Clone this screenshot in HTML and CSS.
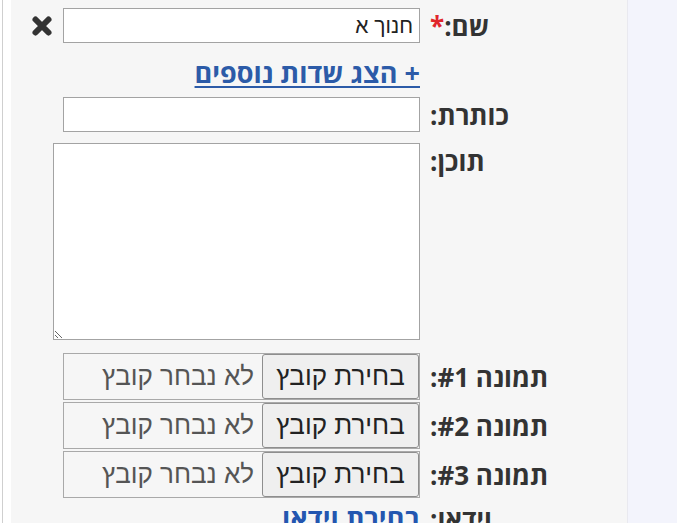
FILE: index.html
```html
<!DOCTYPE html>
<html lang="he">
<head>
<meta charset="utf-8">
<title>טופס</title>
<link rel="stylesheet" href="styles.css">
</head>
<body>
<div class="page">
  <div class="strip"></div>
  <main class="panel">
    <form class="form" dir="rtl">
      <label class="lbl r1" for="name">שם:<span class="req">*</span></label>
      <div class="field r1"><input id="name" class="txt" type="text" value="חנוך א"></div>
      <div class="icon r1" aria-label="הסר">
        <svg width="24" height="24" viewBox="0 0 24 24"><path d="M5.5 5.5 L18.5 18.5 M18.5 5.5 L5.5 18.5" stroke="#333333" stroke-width="6" stroke-linecap="round"/></svg>
      </div>

      <div class="field r2"><a class="more" href="#">+ הצג שדות נוספים</a></div>

      <label class="lbl r3" for="title">כותרת:</label>
      <div class="field r3"><input id="title" class="txt" type="text"></div>

      <label class="lbl lbl-top r4" for="body">תוכן:</label>
      <div class="field wide r4"><textarea id="body" class="area"></textarea></div>

      <label class="lbl r5">תמונה #1:</label>
      <div class="field r5"><div class="file"><button type="button" class="pick">בחירת קובץ</button><span class="none">לא נבחר קובץ</span></div></div>

      <label class="lbl r6">תמונה #2:</label>
      <div class="field r6"><div class="file"><button type="button" class="pick">בחירת קובץ</button><span class="none">לא נבחר קובץ</span></div></div>

      <label class="lbl r7">תמונה #3:</label>
      <div class="field r7"><div class="file"><button type="button" class="pick">בחירת קובץ</button><span class="none">לא נבחר קובץ</span></div></div>

      <label class="lbl lbl-top r8">וידאו:</label>
      <div class="field r8"><a class="video" href="#">בחירת וידאו</a></div>
    </form>
  </main>
  <aside class="side"></aside>
</div>
</body>
</html>
```
FILE: styles.css
```css
html, body {
  margin: 0;
  padding: 0;
  height: 523px;
  overflow: hidden;
  background: #ffffff;
}
.page {
  direction: ltr;
  display: flex;
  height: 523px;
}
.strip {
  width: 8px;
  margin-left: 2px;
  border-left: 1px solid #cfcfcf;
  background: #ffffff;
  flex: none;
}
.panel {
  width: 616px;
  flex: none;
  background: #f6f6f6;
  box-sizing: border-box;
  padding: 8px 10px 0 20px;
  overflow: hidden;
}
.side {
  flex: 1;
  background: #f3f4fc;
  border-left: 1px solid #e9e9ef;
}
.form {
  display: grid;
  grid-template-columns: 187px 357px 22px;
  column-gap: 10px;
  grid-template-rows: 35px 15px 30px 9px 35px 11px 197px 13px 47px 2px 47px 2px 47px 3px 34px;
  row-gap: 0;
  font-family: "Open Sans", "DejaVu Sans", sans-serif;
  color: #333333;
}
.r1 { grid-row: 1; }
.r2 { grid-row: 3; }
.r3 { grid-row: 5; }
.r4 { grid-row: 7; }
.r5 { grid-row: 9; }
.r6 { grid-row: 11; }
.r7 { grid-row: 13; }
.r8 { grid-row: 15; }

.lbl {
  grid-column: 1;
  text-align: left;
  font-size: 26px;
  font-weight: 700;
  line-height: 34px;
  align-self: center;
  color: #333333;
  white-space: nowrap;
}
.lbl-top { align-self: start; padding-top: 1px; }
.req {
  color: #e0262b;
  font-weight: 700;
}
.field {
  grid-column: 2;
  display: flex;
  align-items: stretch;
}
.field.wide {
  justify-self: start;
}
.icon {
  grid-column: 3;
  display: flex;
  align-items: center;
  justify-content: center;
}
.icon svg { display: block; margin-top: 1px; flex: none; }

.txt {
  box-sizing: border-box;
  width: 357px;
  height: 35px;
  margin: 0;
  border: 1px solid #a3a3a3;
  border-radius: 0;
  background: #ffffff;
  padding: 0 6px;
  font-family: "Liberation Sans", "DejaVu Sans", sans-serif;
  font-size: 21px;
  color: #222222;
  text-align: right;
  outline: none;
}
.more {
  display: block;
  width: 100%;
  text-align: right;
  font-size: 27px;
  font-weight: 700;
  line-height: 30px;
  color: #2c5ba8;
  text-decoration: underline;
  text-decoration-thickness: 2px;
  text-underline-offset: 3px;
  white-space: nowrap;
}
.area {
  box-sizing: border-box;
  width: 367px;
  height: 197px;
  margin: 0;
  border: 1px solid #a3a3a3;
  border-radius: 0;
  background: #ffffff;
  font-family: "Liberation Sans", sans-serif;
  font-size: 20px;
  outline: none;
}
.file {
  box-sizing: border-box;
  width: 357px;
  height: 47px;
  display: flex;
  align-items: stretch;
  border: 1px solid #a9a9a9;
  background: #f6f6f6;
}
.pick {
  box-sizing: border-box;
  width: 157px;
  margin: 0;
  padding: 0;
  border: 1px solid #8e8e8e;
  border-radius: 3px;
  background: #efefef;
  font-family: "Liberation Sans", "DejaVu Sans", sans-serif;
  font-size: 26px;
  color: #222222;
  flex: none;
  white-space: nowrap;
}
.none {
  display: flex;
  align-items: center;
  padding-right: 8px;
  font-family: "Liberation Sans", "DejaVu Sans", sans-serif;
  font-size: 26px;
  color: #555555;
  white-space: nowrap;
}
.video {
  display: block;
  width: 100%;
  text-align: right;
  font-size: 27px;
  font-weight: 700;
  line-height: 34px;
  color: #2356b0;
  text-decoration: underline;
  white-space: nowrap;
}
```
